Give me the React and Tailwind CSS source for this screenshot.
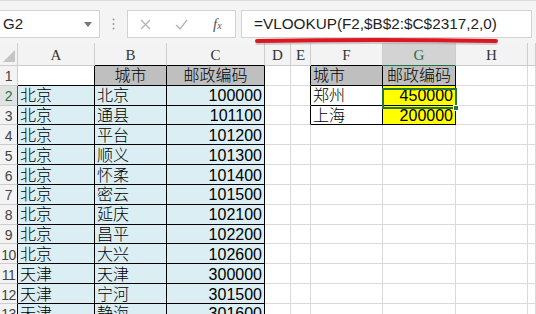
import React from 'react';

// 列宽（像素）：行号列、A..H、以及最右侧露出的一截 I 列
const COL_LETTERS = ['', 'A', 'B', 'C', 'D', 'E', 'F', 'G', 'H', ''];

const ROWS = [
  ['北京', '北京', '100000'],
  ['北京', '通县', '101100'],
  ['北京', '平台', '101200'],
  ['北京', '顺义', '101300'],
  ['北京', '怀柔', '101400'],
  ['北京', '密云', '101500'],
  ['北京', '延庆', '102100'],
  ['北京', '昌平', '102200'],
  ['北京', '大兴', '102600'],
  ['天津', '天津', '300000'],
  ['天津', '宁河', '301500'],
  ['天津', '静海', '301600'],
];

const LOOKUP = [
  ['郑州', '450000'],
  ['上海', '200000'],
];

const RIGHT = {
  grid: 'border-r-[#dadada]',
  hdr: 'border-r-[#cdcdcd]',
  black: 'border-r-black',
  green: 'border-r-[#217346]',
};
const BOTTOM = {
  grid: 'border-b-[#dadada]',
  hdr: 'border-b-[#cdcdcd]',
  black: 'border-b-black',
  green: 'border-b-[#217346]',
};

const Cell = ({ rb = 'grid', bb = 'grid', className = '', children }) => (
  <div
    className={`border-r border-b ${RIGHT[rb]} ${BOTTOM[bb]} flex items-center overflow-hidden whitespace-nowrap ${className}`}
  >
    {children}
  </div>
);

// 单元格内容与样式
const renderCell = (r, c) => {
  const key = `${r}-${c}`;

  // 列标题行
  if (r === 0) {
    if (c === 0) {
      return (
        <Cell key={key} rb="hdr" bb="hdr" className="bg-[#f3f3f3] justify-end items-end pr-[2px] pb-[3px]">
          <svg width="12" height="12" viewBox="0 0 12 12">
            <polygon points="12,0 12,12 0,12" fill="#c4c4c4" />
          </svg>
        </Cell>
      );
    }
    const selected = c === 7;
    const bb = c === 2 || c === 3 || c === 6 ? 'black' : selected ? 'green' : 'hdr';
    return (
      <Cell
        key={key}
        rb="hdr"
        bb={bb}
        className={`justify-center items-end pb-[1px] font-['Liberation_Serif',serif] text-[15px] leading-[18px] ${
          selected ? 'bg-[#d3d3d3] text-[#217346]' : 'bg-[#f3f3f3] text-[#333]'
        }`}
      >
        {COL_LETTERS[c]}
      </Cell>
    );
  }

  // 行号列
  if (c === 0) {
    const rb = r === 2 ? 'green' : r >= 2 ? 'black' : 'hdr';
    return (
      <Cell
        key={key}
        rb={rb}
        bb="hdr"
        className={`justify-center text-[14px] tracking-[-0.5px] pt-[2px] ${
          r === 2 ? 'bg-[#e2e2e2] text-[#217346]' : 'bg-[#f3f3f3] text-[#444]'
        }`}
      >
        {r}
      </Cell>
    );
  }

  // 左侧数据表 A..C
  if (c >= 1 && c <= 3) {
    if (r === 1) {
      if (c === 1) return <Cell key={key} rb="black" bb="black" className="bg-white" />;
      return (
        <Cell key={key} rb="black" bb="black" className="bg-[#bfbfbf] justify-center pt-[2px]">
          {c === 2 ? '城市' : '邮政编码'}
        </Cell>
      );
    }
    const row = ROWS[r - 2];
    return (
      <Cell
        key={key}
        rb="black"
        bb="black"
        className={`bg-[#daeef3] pt-[2px] ${c === 3 ? 'justify-end pr-[2px]' : 'pl-[2px]'}`}
      >
        {row[c - 1]}
      </Cell>
    );
  }

  // E 列：右侧表格的左边框
  if (c === 5) {
    return <Cell key={key} rb={r <= 3 ? 'black' : 'grid'} />;
  }

  // 右侧查询表 F..G
  if ((c === 6 || c === 7) && r <= 3) {
    if (r === 1) {
      return (
        <Cell key={key} rb="black" bb="black" className={`bg-[#bfbfbf] pt-[2px] ${c === 6 ? 'pl-[2px]' : 'justify-center'}`}>
          {c === 6 ? '城市' : '邮政编码'}
        </Cell>
      );
    }
    const row = LOOKUP[r - 2];
    return (
      <Cell
        key={key}
        rb="black"
        bb="black"
        className={`pt-[2px] ${c === 6 ? 'bg-white pl-[2px]' : 'bg-[#ffff00] justify-end pr-[2px]'}`}
      >
        {c === 6 ? row[0] : row[1]}
      </Cell>
    );
  }

  return <Cell key={key} />;
};

const FormulaBar = () => (
  <div className="h-[46px] bg-[#f4f4f4] border-t border-t-[#dcdcdc] mt-[3px] flex items-start pt-[9px]">
    <div className="w-[100px] h-[28px] bg-white border border-l-0 border-[#d2d2d2] flex items-center justify-between pl-[3px] pr-[7px]">
      <span className="text-[15px] text-[#222]">G2</span>
      <svg width="8" height="5" viewBox="0 0 8 5">
        <polygon points="0,0 8,0 4,5" fill="#777" />
      </svg>
    </div>
    <div className="w-[27px] h-[28px] flex items-center justify-center">
      <svg width="3" height="12" viewBox="0 0 3 12">
        <circle cx="1.5" cy="1.5" r="1" fill="#9a9a9a" />
        <circle cx="1.5" cy="6" r="1" fill="#9a9a9a" />
        <circle cx="1.5" cy="10.5" r="1" fill="#9a9a9a" />
      </svg>
    </div>
    <div className="w-[109px] h-[28px] bg-white border border-[#d2d2d2] flex items-center">
      <svg className="ml-[12px]" width="11" height="11" viewBox="0 0 11 11">
        <path d="M1 1 L10 10 M10 1 L1 10" stroke="#b3b3b3" strokeWidth="1.3" fill="none" />
      </svg>
      <svg className="ml-[24px]" width="13" height="11" viewBox="0 0 13 11">
        <path d="M1 6 L5 10 L12 1" stroke="#b3b3b3" strokeWidth="1.3" fill="none" />
      </svg>
      <span className="ml-[25px] font-['Liberation_Serif',serif] italic text-[15px] text-[#555] leading-none">
        f<span className="text-[10px]">x</span>
      </span>
    </div>
    <div className="w-[5px]" />
    <div className="w-[291px] h-[28px] bg-white border border-[#d2d2d2] flex items-center pl-[12px]">
      <span className="text-[15.3px] text-[#222] leading-none">=VLOOKUP(F2,$B$2:$C$2317,2,0)</span>
    </div>
  </div>
);

export default function App() {
  const cells = [];
  for (let r = 0; r <= 13; r++) {
    for (let c = 0; c <= 9; c++) cells.push(renderCell(r, c));
  }

  return (
    <div className="relative w-[536px] h-[314px] overflow-hidden bg-white font-['Liberation_Sans','Noto_Sans_CJK_SC',sans-serif] text-black">
      <div className="-mt-[3px]">
        <FormulaBar />
      </div>
      <div className="-mt-[3px] grid grid-cols-[18px_77px_72px_98px_26px_20px_72px_73px_72px_8px] grid-rows-[23px_repeat(13,19.83px)] text-[16px] font-light leading-none">
        {cells}
      </div>

      {/* 选中单元格 G2 */}
      <div className="absolute left-[382px] top-[88px] w-[75px] h-[21px] border-2 border-[#217346]" />
      <div className="absolute left-[453px] top-[105px] w-[6px] h-[6px] bg-[#217346] border border-white" />

      {/* 红色下划线标注 */}
      <svg className="absolute left-0 top-0" width="536" height="60" viewBox="0 0 536 60">
        <path d="M257 43.5 Q376 41.5 496 43.5" stroke="#9a9a9a" strokeOpacity="0.45" strokeWidth="3" fill="none" strokeLinecap="round" />
        <path d="M257 41 Q376 39 496 41" stroke="#dd1620" strokeWidth="4" fill="none" strokeLinecap="round" />
      </svg>
    </div>
  );
}
